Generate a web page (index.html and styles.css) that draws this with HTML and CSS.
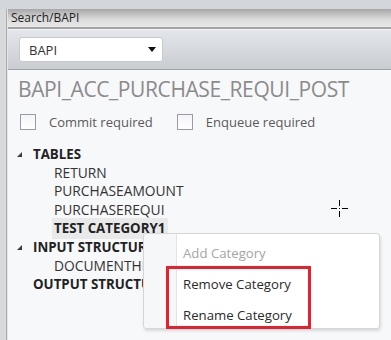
FILE: index.html
```html
<!DOCTYPE html>
<html lang="en">
<head>
    <meta charset="UTF-8">
    <title>Search/BAPI</title>
    <link rel="stylesheet" href="styles.css">
</head>
<body>
<div class="frame">
    <div class="side"></div>
    <div class="panel">
        <div class="panel__title">Search/BAPI</div>
        <div class="panel__toolbar">
            <div class="dropdown">
                <span>BAPI</span>
                <svg class="dropdown__arrow" width="8" height="5" viewBox="0 0 8 5"><path d="M0 0H8L4 5Z" fill="#111"/></svg>
            </div>
        </div>
        <div class="panel__content">
            <h1 class="bapi__name">BAPI_ACC_PURCHASE_REQUI_POST</h1>
            <div class="options">
                <label class="option"><span class="checkbox"></span>Commit required</label>
                <label class="option"><span class="checkbox"></span>Enqueue required</label>
            </div>

            <ul class="tree">
                <li class="tree__group"><span class="tree__toggle"></span>TABLES</li>
                <li class="tree__item">RETURN</li>
                <li class="tree__item">PURCHASEAMOUNT</li>
                <li class="tree__item">PURCHASEREQUI</li>
                <li class="tree__item tree__item--category"><span class="selected">TEST CATEGORY1</span></li>
                <li class="tree__group"><span class="tree__toggle"></span>INPUT STRUCTURE</li>
                <li class="tree__item">DOCUMENTHEADER</li>
                <li class="tree__group">OUTPUT STRUCTURE</li>
            </ul>
        </div>
    </div>
</div>

<!-- context menu over the tree -->
<div class="menu">
    <div class="menu__item menu__item--disabled">Add Category</div>
    <div class="menu__item">Remove Category</div>
    <div class="menu__item">Rename Category</div>
</div>
<div class="highlight"></div>

<svg class="cursor" width="19" height="19" viewBox="0 0 19 19">
    <path d="M9.5 1V7M9.5 12V18M1 9.5H7M12 9.5H18" stroke="#000" stroke-width="1"/>
    <rect x="9" y="9" width="1" height="1" fill="#000"/>
</svg>
</body>
</html>
```

FILE: styles.css
```css
body, html {
    margin: 0;
    height: 100%;
    overflow: hidden;
    background-color: #d3d6db;
    font-family: "Open Sans", "Noto Sans", sans-serif;
}

.frame {
    display: flex;
    height: 340px;
    padding-top: 9px;
    box-sizing: border-box;
}

.side {
    width: 6px;
    background-color: #d8d9db;
    border-right: 1px solid #a9abb0;
}

.panel {
    flex: 1;
    display: flex;
    flex-direction: column;
    border-left: 1px solid #e4e5e7;
}

.panel__title {
    height: 18px;
    padding-left: 3px;
    font-size: 12px;
    line-height: 18px;
    color: #1e1e1e;
    background: linear-gradient(#a7a7a7, #d9d9d9 55%, #e9e9e9);
    border-bottom: 2px solid #a3a3a3;
}

.panel__toolbar {
    height: 41px;
    padding: 7px 0 0 11px;
    box-sizing: border-box;
    background: linear-gradient(#e3e6ea, #c9cdd2);
    border-top: 1px solid #f2f3f5;
    border-bottom: 1px solid #9da1a6;
}

.dropdown {
    display: flex;
    align-items: center;
    justify-content: space-between;
    width: 144px;
    height: 25px;
    padding: 0 6px 0 9px;
    box-sizing: border-box;
    background-color: #fff;
    border: 1px solid #c6c9cd;
    border-radius: 3px;
    font-size: 13px;
    color: #333;
}

.panel__content {
    flex: 1;
    background-color: #f7f8fa;
    padding: 5px 0 0 10px;
}

.bapi__name {
    margin: 0;
    font-size: 21px;
    font-weight: 400;
    color: #8b8b8b;
    line-height: 28px;
    letter-spacing: -0.4px;
}

.options {
    display: flex;
    gap: 22px;
    margin-top: 10px;
    font-size: 13px;
    line-height: 18px;
    color: #5a5a5a;
}

.option {
    display: flex;
    align-items: center;
    gap: 13px;
}

.checkbox {
    width: 14px;
    height: 14px;
    margin-left: 2px;
    border: 1px solid #9a9aa8;
    background: linear-gradient(#f4f4f6, #fff);
}

.tree {
    list-style: none;
    margin: 14px 0 0;
    padding: 0;
    font-size: 13.8px;
    color: #222;
}

.tree li {
    height: 18.6px;
    line-height: 18.6px;
    white-space: nowrap;
}

.tree__group {
    padding-left: 15px;
    font-size: 13.3px;
    font-weight: 700;
    position: relative;
}

.tree__toggle {
    position: absolute;
    left: -1px;
    top: 7px;
    width: 0;
    height: 0;
    border-left: 5px solid transparent;
    border-bottom: 5px solid #3c3c3c;
}

.tree__item {
    padding-left: 36px;
    color: #333;
}

.tree__item--category {
    font-size: 13.3px;
    font-weight: 700;
    color: #222;
}

.selected {
    background-color: #e9e9ea;
    padding: 1px 3px 2px 2px;
    margin-left: -2px;
}

.menu {
    position: absolute;
    left: 143px;
    top: 233px;
    width: 237px;
    height: 96px;
    padding-top: 4px;
    box-sizing: border-box;
    background: linear-gradient(90deg, #f6f7f9 32px, #e2e3e6 32px, #e2e3e6 33px, #fff 33px);
    border: 1px solid #d4d6da;
    border-radius: 3px;
    box-shadow: 1px 2px 3px rgba(0, 0, 0, 0.12);
    font-size: 13.2px;
    color: #2a2a2a;
}

.menu__item {
    height: 31px;
    line-height: 31px;
    padding-left: 39px;
}

.menu__item--disabled {
    color: #a5a5a5;
}

.highlight {
    position: absolute;
    left: 166px;
    top: 266px;
    width: 145px;
    height: 63px;
    box-sizing: border-box;
    border: 3px solid #e8202c;
}

.cursor {
    position: absolute;
    left: 330px;
    top: 199px;
}
```
